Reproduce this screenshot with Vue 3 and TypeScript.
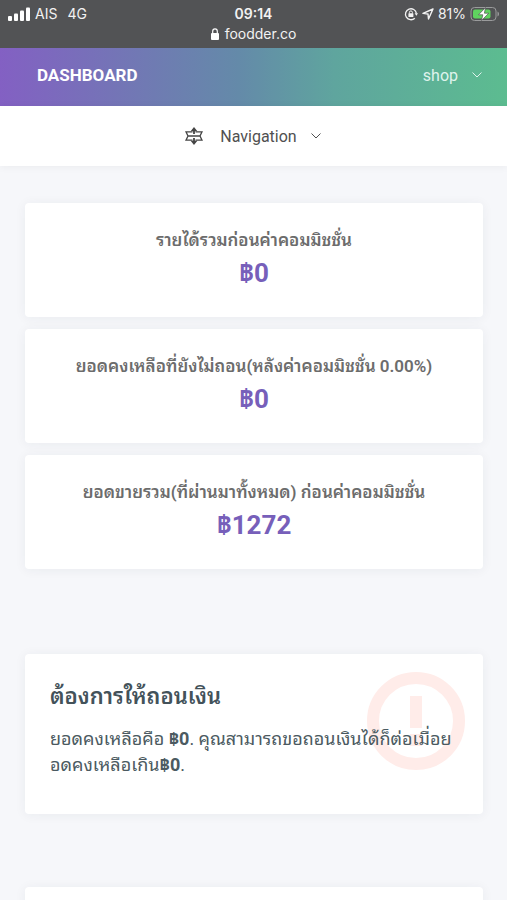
<script setup lang="ts">
interface Stat {
  label: string
  value: string
}

const stats: Stat[] = [
  { label: 'รายได้รวมก่อนค่าคอมมิชชั่น', value: '฿0' },
  { label: 'ยอดคงเหลือที่ยังไม่ถอน(หลังค่าคอมมิชชั่น 0.00%)', value: '฿0' },
  { label: 'ยอดขายรวม(ที่ผ่านมาทั้งหมด) ก่อนค่าคอมมิชชั่น', value: '฿1272' },
]
</script>

<template>
  <div class="page">
    <div class="status">
      <div class="status-row">
        <div class="status-side">
          <svg class="signal" width="22" height="14" viewBox="0 0 22 14" aria-hidden="true">
            <rect x="0" y="9" width="4" height="5" rx="1" />
            <rect x="6" y="6.500" width="4" height="7.500" rx="1" />
            <rect x="12" y="3.500" width="4" height="10.500" rx="1" />
            <rect x="18" y="0.500" width="4" height="13.500" rx="1" />
          </svg>
          <span class="carrier">AIS</span>
          <span class="network">4G</span>
        </div>
        <strong class="clock">09:14</strong>
        <div class="status-side right">
          <svg width="14" height="14" viewBox="0 0 14 14" fill="none" stroke="#f2f2f2" stroke-width="1.300" aria-hidden="true">
            <path d="M10.800 11.200A5.500 5.500 0 1 1 12.400 6.400" />
            <path d="M10.600 6.200h3.400l-1.600 2.600z" fill="#f2f2f2" stroke="none" />
            <rect x="4.400" y="6.200" width="5" height="3.800" rx="0.600" fill="#f2f2f2" stroke="none" />
            <path d="M5.400 6.500V5.400a1.500 1.500 0 0 1 3 0v1.100" stroke-width="1" />
          </svg>
          <svg width="12" height="12" viewBox="0 0 12 12" fill="none" stroke="#f2f2f2" stroke-width="1.400" stroke-linejoin="round" aria-hidden="true">
            <path d="M11 1 1 5.400l5 .6.500 5z" />
          </svg>
          <span>81%</span>
          <svg width="29" height="16" viewBox="0 0 29 16" aria-hidden="true">
            <rect x="1" y="1.500" width="25" height="13" rx="3.500" fill="none" stroke="#9a9b9c" />
            <path d="M27.500 5.500c2 .7 2 4.300 0 5z" fill="#9a9b9c" />
            <rect x="3" y="3.500" width="17.500" height="9" rx="2" fill="#5fd35f" />
            <path d="M15.500 1.500 8.500 8.800h4.300l-1.300 5.700 7.300-7.300h-4.400z" fill="#fff" stroke="#525355" stroke-width="0.700" />
          </svg>
        </div>
      </div>
      <div class="address">
        <svg width="8" height="12" viewBox="0 0 8 12" aria-hidden="true">
          <rect x="0" y="5" width="8" height="7" rx="1" fill="#fff" />
          <path d="M1.700 5.500V3.200a2.300 2.300 0 0 1 4.600 0v2.300" fill="none" stroke="#fff" stroke-width="1.200" />
        </svg>
        <span>foodder.co</span>
      </div>
    </div>

    <header class="topbar">
      <h1>DASHBOARD</h1>
      <button type="button" class="account">
        <span>shop</span>
        <svg class="chevron" width="12" height="12" viewBox="0 0 12 12" aria-hidden="true"><path d="m1.500 3.500 4.500 4.500 4.500-4.500" /></svg>
      </button>
    </header>

    <nav class="nav">
      <button type="button" class="nav-toggle">
        <svg class="nav-icon" width="18" height="18" viewBox="0 0 18 18" fill="none" stroke="#454545" stroke-width="1.300" aria-hidden="true">
          <path d="M7.500 4.800H1l2 4.200-2 4.200h6.500M10.500 4.800H17L15 9l2 4.200h-6.500M3 9h12" />
          <path d="M9 3v4M9 11v4" stroke-width="1.800" />
          <path d="m9 0 3.400 4.200H5.600zM9 18l3.400-4.200H5.600z" fill="#454545" stroke="none" />
        </svg>
        <span>Navigation</span>
        <svg class="chevron" width="12" height="12" viewBox="0 0 12 12" aria-hidden="true"><path d="m1.500 3.500 4.500 4.500 4.500-4.500" /></svg>
      </button>
    </nav>

    <main class="content">
      <section class="stats">
        <article v-for="stat in stats" :key="stat.label" class="card stat">
          <h2>{{ stat.label }}</h2>
          <strong>{{ stat.value }}</strong>
        </article>
      </section>

      <section class="card notice">
        <svg class="notice-icon" width="98" height="98" viewBox="0 0 98 98" aria-hidden="true">
          <circle cx="49" cy="49" r="43" fill="none" stroke="#ffece9" stroke-width="12" />
          <path d="M43 24h12v32H43zM43 62h12v12H43z" fill="#ffece9" />
        </svg>
        <div class="notice-text">
          <h2>ต้องการให้ถอนเงิน</h2>
          <p>ยอดคงเหลือคือ <b>฿0</b>. คุณสามารถขอถอนเงินได้ก็ต่อเมื่อยอดคงเหลือเกิน<b>฿0</b>.</p>
        </div>
      </section>

      <section class="card next"></section>
    </main>
  </div>
</template>

<style>
body {
  background: #f6f7fa;
}
</style>

<style scoped>
.page {
  height: 100vh;
  overflow: hidden;
  display: flex;
  flex-direction: column;
  background: #f6f7fa;
  font-family: Roboto, Thonburi, "Noto Sans Thai Looped", Loma, Garuda, Waree, "Noto Sans Thai", "Noto Sans", sans-serif;
}
.page > * {
  flex-shrink: 0;
}
.status {
  height: 48px;
  box-sizing: border-box;
  padding: 4px 8px 0;
  background: #525355;
  color: #f2f2f2;
  font-family: Inter, sans-serif;
  font-size: 14px;
  line-height: 20px;
}
.status-row {
  display: grid;
  grid-template-columns: 1fr auto 1fr;
  align-items: center;
}
.status-side {
  display: flex;
  align-items: center;
  gap: 5px;
}
.right {
  justify-content: flex-end;
  gap: 4px;
}
.signal {
  fill: #fff;
}
.network {
  margin-left: 5px;
}
.clock {
  font-weight: 600;
}
.address {
  display: flex;
  justify-content: center;
  align-items: center;
  gap: 6px;
}
.topbar {
  height: 58px;
  box-sizing: border-box;
  padding: 0 24px 4px 37px;
  display: flex;
  align-items: center;
  justify-content: space-between;
  background: linear-gradient(90deg, #8360c3, #648aa9 47%, #5fa59e 66%, #5cbc90);
}
h1 {
  margin: 0;
  color: #fff;
  font-size: 17px;
  font-weight: 700;
}
button {
  display: flex;
  align-items: center;
  padding: 0;
  border: 0;
  background: none;
  font: inherit;
  font-size: 16px;
  gap: 13px;
}
.account {
  color: #dff3ec;
}
.chevron {
  fill: none;
  stroke: currentColor;
}
.nav {
  height: 60px;
  display: flex;
  align-items: center;
  justify-content: center;
  background: #fff;
  box-shadow: 0 1px 8px rgba(0, 0, 0, 0.05);
}
.nav-toggle {
  color: #505050;
}
.nav-icon {
  margin-right: 4px;
}
.content {
  padding: 37px 24px 0 25px;
}
.stats {
  display: grid;
  gap: 12px;
}
.card {
  background: #fff;
  border-radius: 4px;
  box-shadow: 0 1px 12px rgba(40, 50, 60, 0.06);
}
.stat {
  height: 114px;
  box-sizing: border-box;
  padding-top: 22px;
  text-align: center;
}
.stat h2 {
  margin: 0;
  color: #6c6c6c;
  font-size: 17px;
  font-weight: 600;
  line-height: 30px;
  white-space: nowrap;
}
.stat strong {
  display: block;
  color: #775fba;
  font-size: 26px;
  font-weight: 700;
  line-height: 36px;
}
.notice {
  position: relative;
  margin-top: 85px;
  height: 160px;
  box-sizing: border-box;
  padding: 26px 25px 0;
  color: #4b5a61;
}
.notice-icon {
  position: absolute;
  top: 18px;
  right: 18px;
}
.notice-text {
  position: relative;
}
.notice h2 {
  margin: 0 0 12px;
  color: #43525a;
  font-size: 22px;
  font-weight: 600;
  line-height: 34px;
}
.notice p {
  margin: 0;
  font-size: 18px;
  line-height: 26px;
  word-break: break-all;
}
.next {
  margin-top: 73px;
  height: 114px;
}
</style>
